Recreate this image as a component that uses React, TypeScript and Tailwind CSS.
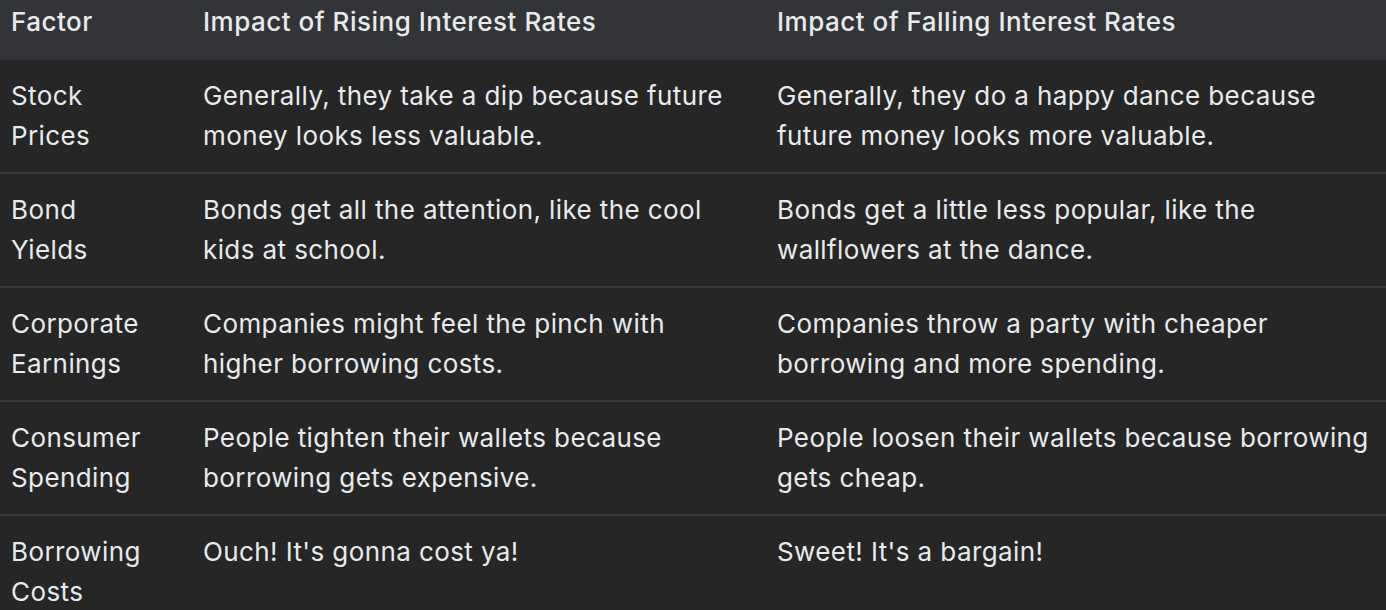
import React from "react";

const rows: [string, string, string][] = [
  ["Stock Prices", "Generally, they take a dip because future money looks less valuable.", "Generally, they do a happy dance because future money looks more valuable."],
  ["Bond Yields", "Bonds get all the attention, like the cool kids at school.", "Bonds get a little less popular, like the wallflowers at the dance."],
  ["Corporate Earnings", "Companies might feel the pinch with higher borrowing costs.", "Companies throw a party with cheaper borrowing and more spending."],
  ["Consumer Spending", "People tighten their wallets because borrowing gets expensive.", "People loosen their wallets because borrowing gets cheap."],
  ["Borrowing Costs", "Ouch! It's gonna cost ya!", "Sweet! It's a bargain!"],
];

const pad = ["pl-[11px] pr-[32px]", "pl-[11px] pr-[32px]", "pl-[11px] pr-[8px]"];

export default function App() {
  return (
    <div
      className="w-[1386px] h-[610px] overflow-hidden bg-[#262626] text-[#e8eaed]"
      style={{ fontFamily: "Inter, 'Noto Sans', sans-serif" }}
    >
      <table className="w-full border-collapse text-[26px] leading-[40px] tracking-[0.4px] table-fixed">
        <colgroup>
          <col className="w-[192px]" />
          <col className="w-[574px]" />
          <col />
        </colgroup>
        <thead>
          <tr className="bg-[#333437]">
            <th className={`text-left font-medium tracking-[0.5px] pt-[2px] pb-[18px] ${pad[0]}`}>Factor</th>
            <th className={`text-left font-medium tracking-[0.5px] pt-[2px] pb-[18px] ${pad[1]}`}>Impact of Rising Interest Rates</th>
            <th className={`text-left font-medium tracking-[0.5px] pt-[2px] pb-[18px] ${pad[2]}`}>Impact of Falling Interest Rates</th>
          </tr>
        </thead>
        <tbody>
          {rows.map((r, i) => (
            <tr key={i} className={i > 0 ? "border-t-2 border-[#3a3a3a]" : ""}>
              {r.map((c, j) => (
                <td key={j} className={`align-top py-[16px] ${pad[j]}`}>
                  {c}
                </td>
              ))}
            </tr>
          ))}
        </tbody>
      </table>
    </div>
  );
}
